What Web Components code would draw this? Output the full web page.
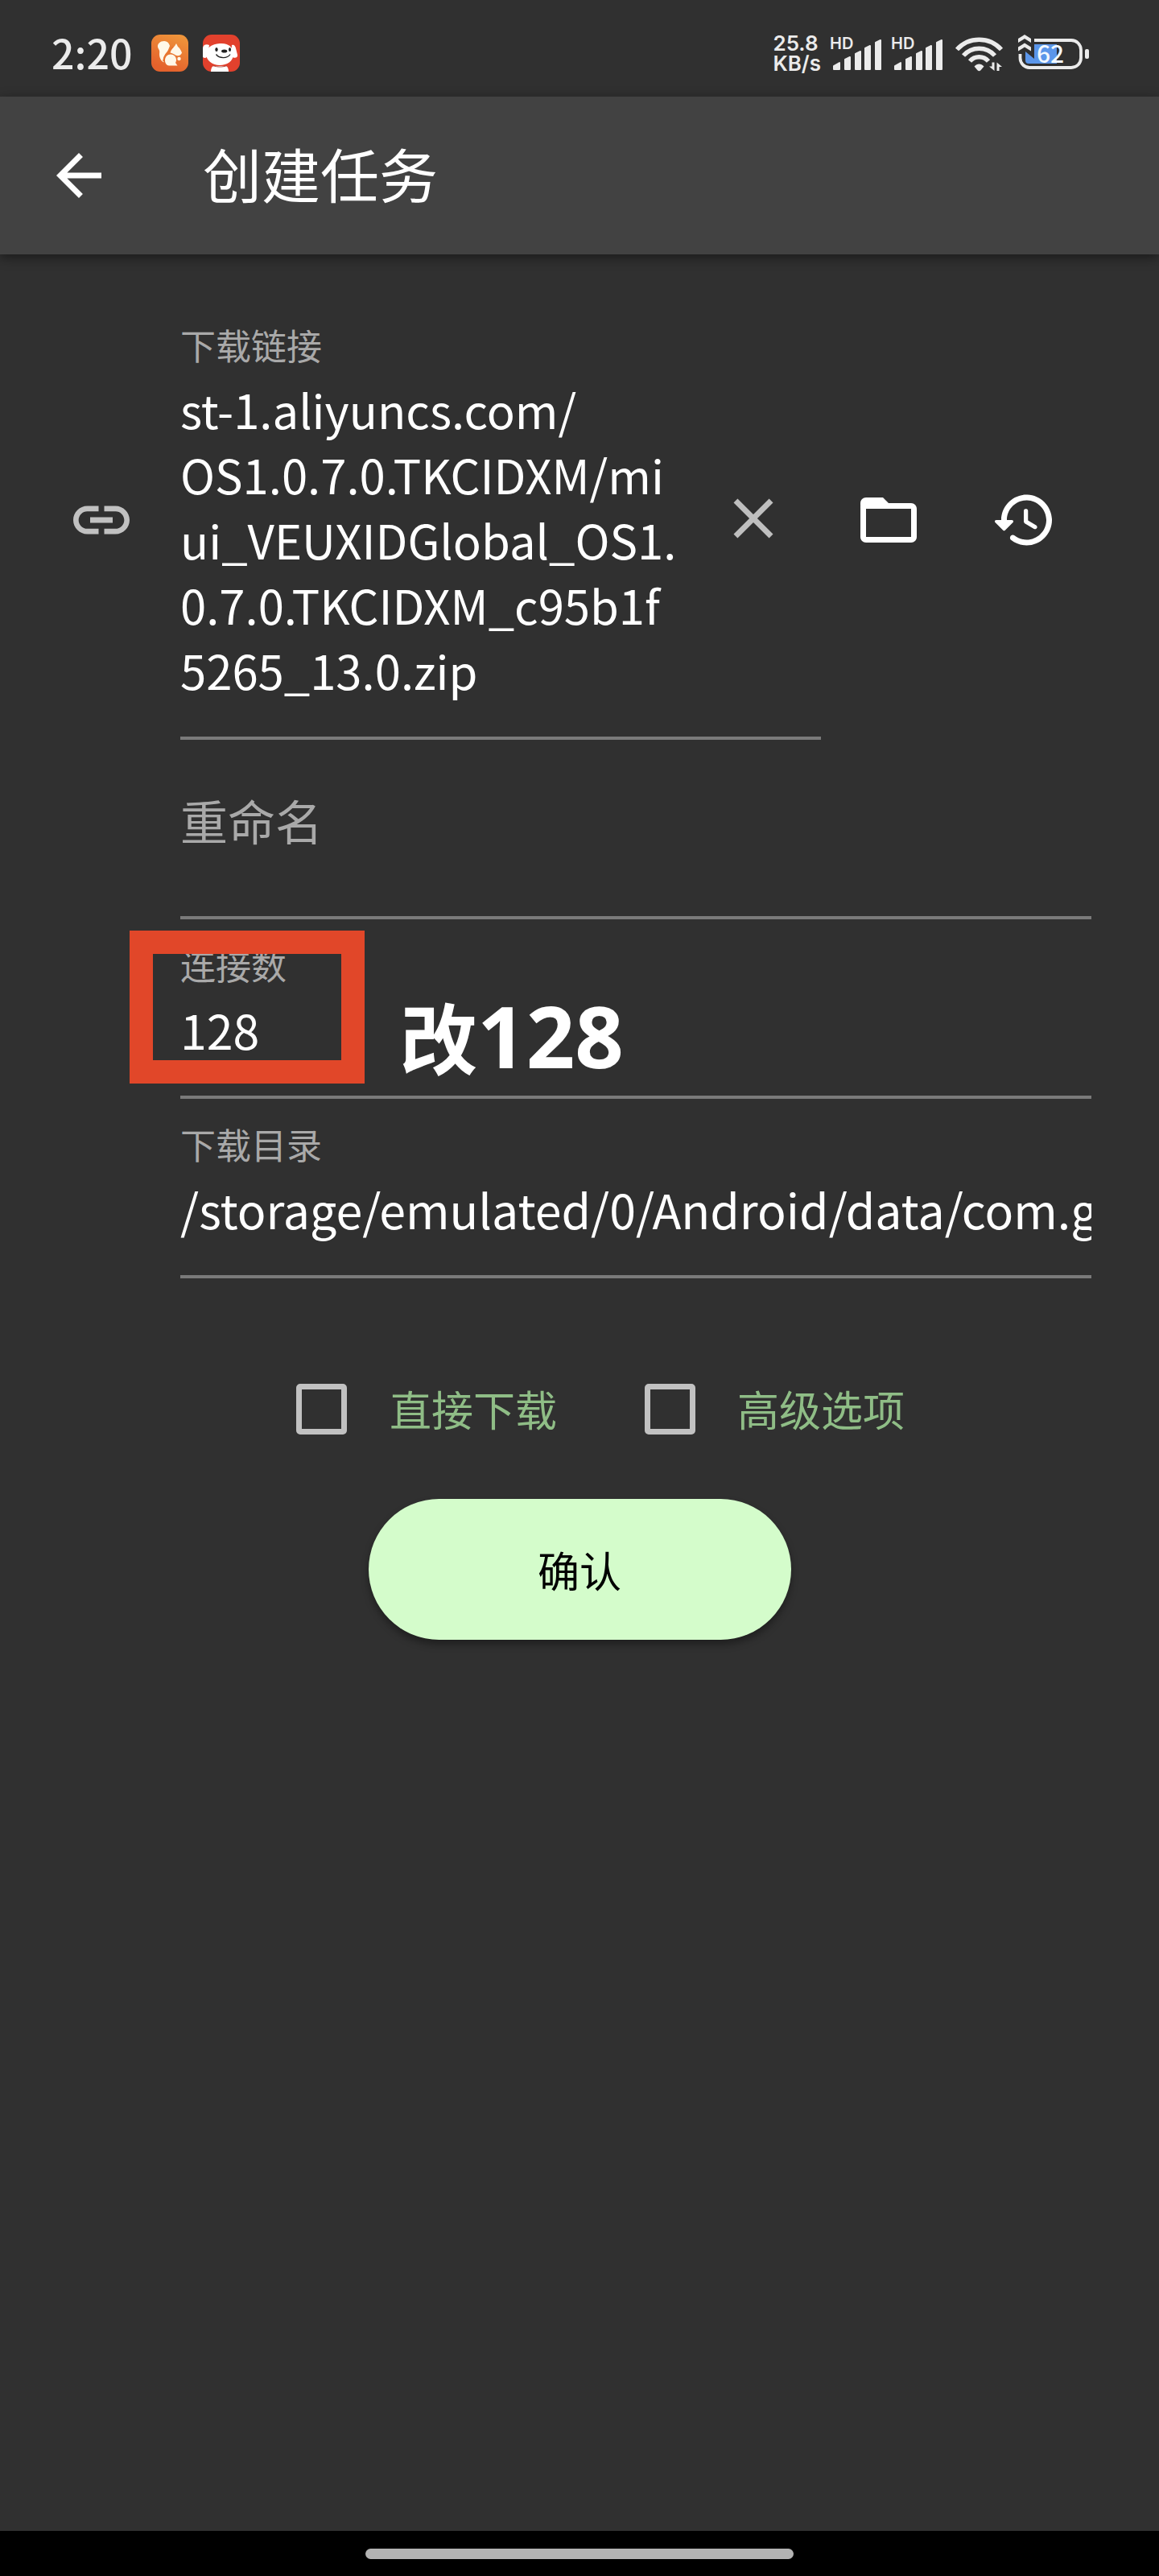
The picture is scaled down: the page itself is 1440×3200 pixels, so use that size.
<!DOCTYPE html>
<html lang="zh-CN">
<head>
<meta charset="utf-8">
<meta name="viewport" content="width=device-width, initial-scale=1">
<title>创建任务</title>
<style>
  body {
    margin: 0;
    background: #303030;
    color: #fff;
    font-family: "Noto Sans CJK SC", "Noto Sans", sans-serif;
  }
</style>
</head>
<body>
<create-task-page></create-task-page>

<script>
// Shared helper: attach an open shadow root and fill it
function render(host, html) {
  host.attachShadow({ mode: "open" }).innerHTML = html;
}

const ICONS = {
  back: "M20 11H7.83l5.59-5.59L12 4l-8 8 8 8 1.41-1.41L7.83 13H20v-2z",
  link: "M3.9 12c0-1.71 1.39-3.1 3.1-3.1h4V7H7c-2.76 0-5 2.24-5 5s2.24 5 5 5h4v-1.9H7c-1.71 0-3.1-1.39-3.1-3.1zM8 13h8v-2H8v2zm9-6h-4v1.9h4c1.71 0 3.1 1.39 3.1 3.1s-1.39 3.1-3.1 3.1h-4V17h4c2.76 0 5-2.24 5-5s-2.24-5-5-5z",
  close: "M19 6.41L17.59 5 12 10.59 6.41 5 5 6.41 10.59 12 5 17.59 6.41 19 12 13.41 17.59 19 19 17.59 13.41 12z",
  folder: "M10 4H4c-1.1 0-1.99.9-1.99 2L2 18c0 1.1.9 2 2 2h16c1.1 0 2-.9 2-2V8c0-1.1-.9-2-2-2h-8l-2-2zm10 14H4V8h16v10z",
  history: "M13.26 3C8.17 2.86 4 6.95 4 12H2.21c-.45 0-.67.54-.35.85l2.79 2.8c.2.2.51.2.71 0l2.79-2.8c.31-.31.09-.85-.36-.85H6c0-3.9 3.18-7.05 7.1-7 3.72.05 6.85 3.18 6.9 6.9.05 3.91-3.1 7.1-7 7.1-1.61 0-3.1-.55-4.28-1.48-.4-.31-.96-.28-1.32.08-.42.42-.39 1.13.08 1.49C9 20.29 10.91 21 13 21c5.05 0 9.14-4.17 9-9.26-.13-4.69-4.05-8.61-8.74-8.74zm-.51 5c-.41 0-.75.34-.75.75v3.68c0 .35.19.68.49.86l3.12 1.85c.36.21.82.09 1.03-.26.21-.36.09-.82-.26-1.03l-2.88-1.71v-3.4c0-.4-.34-.74-.75-.74z"
};

class MdIcon extends HTMLElement {
  connectedCallback() {
    render(this, `
      <style>
        :host { display: block; width: 84px; height: 84px; }
        svg { display: block; width: 100%; height: 100%; fill: currentColor; }
      </style>
      <svg viewBox="0 0 24 24" aria-hidden="true"><path d="${ICONS[this.getAttribute("name")]}"/></svg>
    `);
  }
}
customElements.define("md-icon", MdIcon);

class IconButton extends HTMLElement {
  connectedCallback() {
    render(this, `
      <style>
        :host { display: block; flex: none; }
        button {
          display: flex;
          align-items: center;
          justify-content: center;
          width: var(--tap-size, 168px);
          height: 168px;
          padding: 0;
          border: none;
          background: none;
          color: inherit;
          cursor: pointer;
        }
      </style>
      <button type="button" aria-label="${this.getAttribute("label")}">
        <md-icon name="${this.getAttribute("icon")}"></md-icon>
      </button>
    `);
  }
}
customElements.define("icon-button", IconButton);

class SignalBars extends HTMLElement {
  connectedCallback() {
    render(this, `
      <style>
        :host { display: block; }
        svg { display: block; width: 64px; height: 46px; overflow: visible; fill: currentColor; }
        text { font-family: Inter, sans-serif; font-size: 20px; font-weight: 600; }
      </style>
      <svg viewBox="0 0 64 46">
        <text x="-1" y="18">HD</text>
        <g stroke="currentColor" stroke-width="2" stroke-linejoin="round">
          <path d="M4 39l7-4v8H4z"/>
          <path d="M18 31l6-3v15h-6z"/>
          <path d="M31 24l6-3v22h-6z"/>
          <path d="M43 17l6-3v29h-6z"/>
          <path d="M56 10l6-3v36h-6z"/>
        </g>
      </svg>
    `);
  }
}
customElements.define("signal-bars", SignalBars);

class StatusBar extends HTMLElement {
  connectedCallback() {
    render(this, `
      <style>
        :host {
          display: flex;
          align-items: center;
          justify-content: space-between;
          box-sizing: border-box;
          height: 120px;
          padding: 12px 87px 0 64px;
          color: #ebebeb;
        }
        .left, .right, .apps { display: flex; align-items: center; }
        .left { gap: 24px; }
        .apps { gap: 18px; }
        .right { gap: 12px; }
        .time { padding-bottom: 4px; font-size: 50px; line-height: 50px; font-weight: 500; }
        .speed { font-family: Inter, sans-serif; font-size: 26px; line-height: 25px; font-weight: 600; }
        .speed span { display: block; }
        svg { display: block; overflow: visible; }
        .level { font-size: 30px; font-weight: 500; }
      </style>
      <div class="left">
        <span class="time">2:20</span>
        <div class="apps">
          <svg width="46" height="46" viewBox="0 0 46 46">
            <defs>
              <linearGradient id="fur" x1="1" y1="0" x2="0.6" y2="1">
                <stop offset="0" stop-color="#ef9a3c"/>
                <stop offset="1" stop-color="#e4622c"/>
              </linearGradient>
            </defs>
            <rect width="46" height="46" rx="11" fill="url(#fur)"/>
            <g fill="#fff8e8">
              <path d="M23 14C22 10 19.500 8 16 8c-5 0-8.500 3.500-8 7 .3 2.600 2.500 3.600 2.200 6.800C9.500 27 11 32 15.500 34.500c-1-5 .5-9 4-12z"/>
              <path d="M23.500 22.500c1-4 4-6.500 6-9l1.500-2.500 2 4c2.500 1.500 4 5 5 7.500-1 3-4.500 4.800-8 3-2-1.500-4-2.500-6.500-3z"/>
              <path d="M17 32c0-4.500 3-7.500 7-7.500s7 3 7 7c0 1.500-.5 2.500-1 3.500l2.500 3.500H22c-3 0-5-3-5-6.500z"/>
              <circle cx="34.500" cy="30" r="2.200"/>
            </g>
            <path d="M15 33c.5-7 5-11 12-18" fill="none" stroke="#e8762f" stroke-width="1.800"/>
          </svg>
          <svg width="46" height="46" viewBox="0 0 46 46">
            <clipPath id="tile"><rect width="46" height="46" rx="11"/></clipPath>
            <g clip-path="url(#tile)">
              <rect width="46" height="46" fill="#e2412d"/>
              <g fill="#fff">
                <path d="M8 13C4 11 0 13 0 17v11c3 2 5 1 6-3z"/>
                <path d="M36 13c3-1 4 1 5 4l2 8c1 4-4 5-8 2z"/>
                <path d="M21 11c11-1 17 5 17 13 0 9-8 14-17 14S4 32 4 24c0-8 7-12 17-13z"/>
                <path d="M13 39h16c2 1 3 4 3 7H10c0-3 1-6 3-7z"/>
              </g>
              <path d="M12 38.500c6 2 13 2 18 0" fill="none" stroke="#b5483c"/>
              <g fill="#222">
                <ellipse cx="17" cy="18.500" rx="1.700" ry="2.600"/>
                <ellipse cx="33.500" cy="18.500" rx="1.500" ry="2.600"/>
                <ellipse cx="26.700" cy="20.500" rx="3.600" ry="2"/>
              </g>
              <path d="M16.500 24.500c4 5.500 14 5.500 17.500 0" fill="none" stroke="#222" stroke-width="1.300"/>
            </g>
          </svg>
        </div>
      </div>
      <div class="right">
        <div class="speed"><span>25.8</span><span>KB/s</span></div>
        <signal-bars></signal-bars>
        <signal-bars></signal-bars>
        <svg width="64" height="46" viewBox="0 0 64 46">
          <g fill="none" stroke="currentColor" stroke-width="5.500">
            <path d="M5 18.500a37 37 0 0 1 55 0"/>
            <path d="M13 26a26 26 0 0 1 39 0"/>
            <path d="M21 33a15 15 0 0 1 23 0"/>
          </g>
          <path d="M26.500 39.500c3.500-4 8.500-4 12 0l-4 4.700q-2 2-4 0z" fill="currentColor"/>
          <path d="M48.500 34.500h3V45L45 39.500h3.500zM54.500 45V34.500L61 40h-3.500v5z" fill="currentColor"/>
        </svg>
        <svg width="93" height="46" viewBox="0 0 93 46">
          <path d="M14 21l11 9V12h28v24H18q-4 0-4-4z" fill="#5b96ea"/>
          <path d="M25 7h46a12 12 0 0 1 12 12v10a12 12 0 0 1-12 12H19A12 12 0 0 1 7.500 29v-5" fill="none" stroke="currentColor" stroke-width="3.800"/>
          <rect x="88" y="18" width="5" height="12" rx="2" fill="currentColor"/>
          <path d="M5 5l8-5 8 5v5l-8-5-8 5zM5 15.500l8-5 8 5v5l-8-5-8 5z" fill="currentColor"/>
          <text class="level" x="28" y="35" fill="#f2f8ff">62</text>
        </svg>
      </div>
    `);
  }
}
customElements.define("status-bar", StatusBar);

class AppBar extends HTMLElement {
  connectedCallback() {
    render(this, `
      <style>
        :host {
          display: flex;
          align-items: center;
          gap: 112px;
          height: 196px;
          padding: 0 56px;
          background: #424242;
          box-shadow: 0 4px 14px rgba(0, 0, 0, 0.45);
        }
        icon-button { --tap-size: 84px; }
        h1 { margin: 0; padding-bottom: 8px; font-size: 73px; line-height: 100px; font-weight: 400; }
      </style>
      <icon-button icon="back" label="返回"></icon-button>
      <h1><slot></slot></h1>
    `);
  }
}
customElements.define("app-bar", AppBar);

class TextField extends HTMLElement {
  connectedCallback() {
    const value = this.getAttribute("value") || "";
    const lines = value.split("\n").length;
    const control = lines > 1
      ? `<textarea id="box" rows="${lines}" spellcheck="false">${value}</textarea>`
      : `<input id="box" type="text" value="${value}" spellcheck="false">`;
    render(this, `
      <style>
        :host {
          display: flex;
          align-items: center;
          min-width: 0;
          border-bottom: 4px solid #7a7a7a;
        }
        .field {
          flex: 1;
          min-width: 0;
          display: grid;
          grid-template-rows: 52px auto;
          row-gap: 14px;
          padding: 30px 0 42px;
        }
        label {
          grid-area: 1 / 1;
          color: #a9a9a9;
          font-size: 44px;
          line-height: 52px;
        }
        /* an empty field shows its label large, across both rows */
        .empty label {
          grid-row: 1 / 3;
          font-size: 59px;
          line-height: 140px;
        }
        input, textarea {
          grid-area: 2 / 1;
          display: block;
          box-sizing: border-box;
          width: 100%;
          margin: 0;
          padding: 0;
          border: none;
          outline: none;
          resize: none;
          overflow: hidden;
          background: none;
          color: #fff;
          font-family: inherit;
          font-size: 59px;
          line-height: 81px;
        }
        textarea { font-size: 58px; }
        input { height: 81px; }
      </style>
      <div class="field ${value ? "" : "empty"}">
        <label for="box">${this.getAttribute("label")}</label>
        ${control}
      </div>
      <slot name="suffix"></slot>
    `);
  }
}
customElements.define("text-field", TextField);

class CheckOption extends HTMLElement {
  connectedCallback() {
    render(this, `
      <style>
        :host { display: flex; align-items: center; }
        .tap { display: flex; align-items: center; justify-content: center; width: 168px; height: 168px; }
        input {
          appearance: none;
          width: 63px;
          height: 63px;
          margin: 0;
          border: 7px solid #c1c1c1;
          border-radius: 5px;
        }
        input:checked { background: #8fbd86; }
        label { color: #8fbd86; font-size: 52px; line-height: 72px; }
      </style>
      <span class="tap"><input type="checkbox" id="check"></span>
      <label for="check">${this.getAttribute("label")}</label>
    `);
  }
}
customElements.define("check-option", CheckOption);

class PillButton extends HTMLElement {
  connectedCallback() {
    render(this, `
      <style>
        :host { display: block; }
        button {
          min-width: 525px;
          height: 175px;
          padding: 0 56px;
          border: none;
          border-radius: 88px;
          background: #d4fccb;
          color: #000;
          font-family: inherit;
          font-size: 52px;
          box-shadow: 0 6px 10px rgba(0, 0, 0, 0.35);
          cursor: pointer;
        }
      </style>
      <button type="button"><slot></slot></button>
    `);
  }
}
customElements.define("pill-button", PillButton);

// Red frame with a note beside it, laid over a form row
class CallOut extends HTMLElement {
  connectedCallback() {
    render(this, `
      <style>
        :host {
          position: absolute;
          top: 14px;
          left: 77px;
          display: flex;
          align-items: flex-end;
          gap: 44px;
          pointer-events: none;
          white-space: nowrap;
        }
        .frame { box-sizing: border-box; width: 292px; height: 190px; border: 29px solid #e14729; }
        .note { display: flex; align-items: baseline; font-size: 96px; line-height: 120px; font-weight: 700; }
        .note ::slotted(span) { font-family: "Noto Sans", sans-serif; font-size: 106px; }
      </style>
      <span class="frame"></span>
      <span class="note"><slot></slot></span>
    `);
  }
}
customElements.define("call-out", CallOut);

class NavHandle extends HTMLElement {
  connectedCallback() {
    render(this, `
      <style>
        :host { display: flex; align-items: center; justify-content: center; height: 56px; background: #000; }
        span { width: 37%; height: 13px; border-radius: 7px; background: #b3b3b3; }
      </style>
      <span></span>
    `);
  }
}
customElements.define("nav-handle", NavHandle);

class CreateTaskPage extends HTMLElement {
  connectedCallback() {
    const url = "st-1.aliyuncs.com/\nOS1.0.7.0.TKCIDXM/mi\nui_VEUXIDGlobal_OS1.\n0.7.0.TKCIDXM_c95b1f\n5265_13.0.zip";
    render(this, `
      <style>
        :host { display: flex; flex-direction: column; min-height: 100vh; }
        main { flex: 1; padding: 56px 84px; }
        .row {
          position: relative;
          display: grid;
          grid-template-columns: 84px minmax(0, 1fr);
          column-gap: 56px;
          align-items: center;
        }
        .row.link { grid-template-columns: 84px minmax(0, 1fr) auto; }
        .row > text-field { grid-column: 2; }
        .row > md-icon { color: #c1c1c1; }
        .actions { display: flex; margin-left: -56px; }
        icon-button[slot] { color: #bfbfbf; }
        .options { display: flex; justify-content: center; gap: 56px; margin: 78px 0 28px; }
        .submit { display: flex; justify-content: center; }
      </style>
      <status-bar></status-bar>
      <app-bar>创建任务</app-bar>
      <main>
        <div class="row link">
          <md-icon name="link"></md-icon>
          <text-field label="下载链接" value="${url}">
            <icon-button slot="suffix" icon="close" label="清除"></icon-button>
          </text-field>
          <div class="actions">
            <icon-button icon="folder" label="打开文件夹"></icon-button>
            <icon-button icon="history" label="历史记录"></icon-button>
          </div>
        </div>
        <div class="row"><text-field label="重命名"></text-field></div>
        <div class="row">
          <text-field label="连接数" value="128"></text-field>
          <call-out>改<span>128</span></call-out>
        </div>
        <div class="row"><text-field label="下载目录" value="/storage/emulated/0/Android/data/com.g"></text-field></div>
        <div class="options">
          <check-option label="直接下载"></check-option>
          <check-option label="高级选项"></check-option>
        </div>
        <div class="submit"><pill-button>确认</pill-button></div>
      </main>
      <nav-handle></nav-handle>
    `);
  }
}
customElements.define("create-task-page", CreateTaskPage);
</script>
</body>
</html>
